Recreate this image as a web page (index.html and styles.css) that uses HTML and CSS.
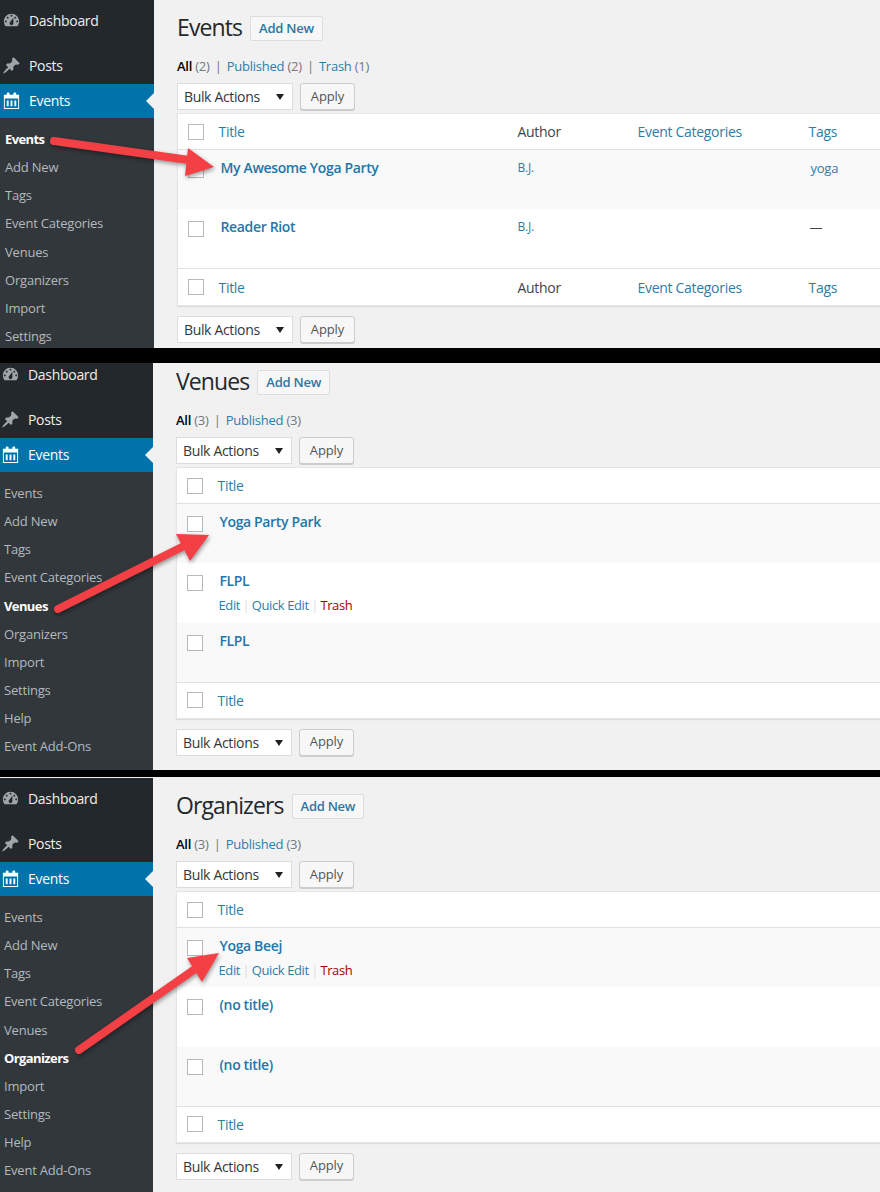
FILE: index.html
```html
<!DOCTYPE html>
<html lang="en">
<head>
    <meta charset="UTF-8">
    <meta name="viewport" content="width=device-width, initial-scale=1.0">
    <title>Events, Venues and Organizers</title>
    <link rel="stylesheet" href="styles.css">
</head>
<body>
    <svg class="icon-defs" aria-hidden="true">
        <symbol id="icon-dashboard" viewBox="0 0 20 20"><path fill-rule="evenodd" d="M3.76 16h12.48c1.1-1.37 1.76-3.11 1.76-5 0-4.42-3.58-8-8-8s-8 3.58-8 8c0 1.89.66 3.63 1.76 5zM10 4c.55 0 1 .45 1 1s-.45 1-1 1-1-.45-1-1 .45-1 1-1zM6 6c.55 0 1 .45 1 1s-.45 1-1 1-1-.45-1-1 .45-1 1-1zm8 0c.55 0 1 .45 1 1s-.45 1-1 1-1-.45-1-1 .45-1 1-1zm-5.37 5.55L12 7v6c0 1.1-.9 2-2 2s-2-.9-2-2c0-.57.24-1.08.63-1.45zM4 10c.55 0 1 .45 1 1s-.45 1-1 1-1-.45-1-1 .45-1 1-1zm12 0c.55 0 1 .45 1 1s-.45 1-1 1-1-.45-1-1 .45-1 1-1z"/></symbol>
        <symbol id="icon-pin" viewBox="0 0 20 20"><path d="M10.44 3.02l1.82-1.82 6.36 6.35-1.83 1.82c-1.05-.68-2.48-.57-3.41.36l-.75.75c-.92.93-1.04 2.35-.35 3.41l-1.83 1.82-2.41-2.41-2.8 2.79c-.42.42-3.38 2.71-3.8 2.29s1.86-3.39 2.28-3.81l2.79-2.79L4.1 9.36l1.83-1.82c1.05.69 2.48.57 3.4-.36l.75-.75c.93-.92 1.05-2.35.36-3.41z"/></symbol>
        <symbol id="icon-calendar" viewBox="0 0 20 20"><path fill-rule="evenodd" d="M15 4h3v15H2V4h3V3c0-.41.15-.76.44-1.06.29-.29.65-.44 1.06-.44s.77.15 1.06.44c.29.3.44.65.44 1.06v1h4V3c0-.41.15-.76.44-1.06.29-.29.65-.44 1.06-.44s.77.15 1.06.44c.29.3.44.65.44 1.06v1zM3 18h14V8H3v10zM5 10h2v6H5v-6zm4 0h2v6H9v-6zm4 0h2v6h-2v-6z"/></symbol>
    </svg>

    <!-- events list -->
    <section class="shot shot-events">
        <nav class="menu">
            <a class="menu-item"><svg class="menu-icon"><use href="#icon-dashboard"/></svg>Dashboard</a>
            <a class="menu-item menu-posts"><svg class="menu-icon"><use href="#icon-pin"/></svg>Posts</a>
            <a class="menu-item menu-active"><svg class="menu-icon"><use href="#icon-calendar"/></svg>Events</a>
            <ul class="submenu">
                <li class="current">Events</li>
                <li>Add New</li>
                <li>Tags</li>
                <li>Event Categories</li>
                <li>Venues</li>
                <li>Organizers</li>
                <li>Import</li>
                <li>Settings</li>
            </ul>
        </nav>
        <main class="content">
            <div class="heading"><h1>Events</h1><a class="add-new">Add New</a></div>
            <div class="subsub"><b>All</b> <span class="count">(2)</span> <span class="sep">|</span> <a>Published</a> <span class="count">(2)</span> <span class="sep">|</span> <a>Trash</a> <span class="count">(1)</span></div>
            <div class="actions"><div class="select">Bulk Actions<i class="caret"></i></div><button class="apply">Apply</button></div>
            <table class="list">
                <colgroup><col class="col-check"><col class="col-title"><col class="col-author"><col class="col-cats"><col></colgroup>
                <thead><tr><td><span class="check"></span></td><th class="head-title">Title</th><th class="plain">Author</th><th>Event Categories</th><th>Tags</th></tr></thead>
                <tbody>
                    <tr class="alt"><td><span class="check"></span></td><td><a class="row-title">My Awesome Yoga Party</a></td><td><a class="small">B.J.</a></td><td></td><td><a class="tag">yoga</a></td></tr>
                    <tr><td><span class="check"></span></td><td><a class="row-title">Reader Riot</a></td><td><a class="small">B.J.</a></td><td></td><td class="dash">—</td></tr>
                </tbody>
                <tfoot><tr><td><span class="check"></span></td><th class="head-title">Title</th><th class="plain">Author</th><th>Event Categories</th><th>Tags</th></tr></tfoot>
            </table>
            <div class="actions actions-bottom"><div class="select">Bulk Actions<i class="caret"></i></div><button class="apply">Apply</button></div>
        </main>
        <svg class="arrow" width="880" height="348">
            <path class="arrow-line" d="M54 141L196 161"/>
            <path class="arrow-head" d="M188 148L214 167L185 176Z"/>
        </svg>
    </section>

    <!-- venues list -->
    <section class="shot shot-venues">
        <nav class="menu">
            <a class="menu-item"><svg class="menu-icon"><use href="#icon-dashboard"/></svg>Dashboard</a>
            <a class="menu-item menu-posts"><svg class="menu-icon"><use href="#icon-pin"/></svg>Posts</a>
            <a class="menu-item menu-active"><svg class="menu-icon"><use href="#icon-calendar"/></svg>Events</a>
            <ul class="submenu">
                <li>Events</li>
                <li>Add New</li>
                <li>Tags</li>
                <li>Event Categories</li>
                <li class="current">Venues</li>
                <li>Organizers</li>
                <li>Import</li>
                <li>Settings</li>
                <li>Help</li>
                <li>Event Add-Ons</li>
            </ul>
        </nav>
        <main class="content">
            <div class="heading"><h1>Venues</h1><a class="add-new">Add New</a></div>
            <div class="subsub"><b>All</b> <span class="count">(3)</span> <span class="sep">|</span> <a>Published</a> <span class="count">(3)</span></div>
            <div class="actions"><div class="select">Bulk Actions<i class="caret"></i></div><button class="apply">Apply</button></div>
            <table class="list">
                <thead><tr><td class="col-check"><span class="check"></span></td><th class="head-title">Title</th></tr></thead>
                <tbody>
                    <tr class="alt"><td><span class="check"></span></td><td><a class="row-title">Yoga Party Park</a></td></tr>
                    <tr><td><span class="check"></span></td><td><a class="row-title">FLPL</a><div class="row-actions"><a>Edit</a><span class="bar">|</span><a>Quick Edit</a><span class="bar">|</span><a class="trash">Trash</a></div></td></tr>
                    <tr class="alt"><td><span class="check"></span></td><td><a class="row-title">FLPL</a></td></tr>
                </tbody>
                <tfoot><tr><td><span class="check"></span></td><th class="head-title">Title</th></tr></tfoot>
            </table>
            <div class="actions actions-bottom"><div class="select">Bulk Actions<i class="caret"></i></div><button class="apply">Apply</button></div>
        </main>
        <svg class="arrow" width="880" height="407">
            <path class="arrow-line" d="M58 246L186 182"/>
            <path class="arrow-head" d="M176 171L209 172L190 198Z"/>
        </svg>
    </section>

    <!-- organizers list -->
    <section class="shot shot-organizers">
        <nav class="menu">
            <a class="menu-item"><svg class="menu-icon"><use href="#icon-dashboard"/></svg>Dashboard</a>
            <a class="menu-item menu-posts"><svg class="menu-icon"><use href="#icon-pin"/></svg>Posts</a>
            <a class="menu-item menu-active"><svg class="menu-icon"><use href="#icon-calendar"/></svg>Events</a>
            <ul class="submenu">
                <li>Events</li>
                <li>Add New</li>
                <li>Tags</li>
                <li>Event Categories</li>
                <li>Venues</li>
                <li class="current">Organizers</li>
                <li>Import</li>
                <li>Settings</li>
                <li>Help</li>
                <li>Event Add-Ons</li>
            </ul>
        </nav>
        <main class="content">
            <div class="heading"><h1>Organizers</h1><a class="add-new">Add New</a></div>
            <div class="subsub"><b>All</b> <span class="count">(3)</span> <span class="sep">|</span> <a>Published</a> <span class="count">(3)</span></div>
            <div class="actions"><div class="select">Bulk Actions<i class="caret"></i></div><button class="apply">Apply</button></div>
            <table class="list">
                <thead><tr><td class="col-check"><span class="check"></span></td><th class="head-title">Title</th></tr></thead>
                <tbody>
                    <tr class="alt"><td><span class="check"></span></td><td><a class="row-title">Yoga Beej</a><div class="row-actions"><a>Edit</a><span class="bar">|</span><a>Quick Edit</a><span class="bar">|</span><a class="trash">Trash</a></div></td></tr>
                    <tr><td><span class="check"></span></td><td><a class="row-title">(no title)</a></td></tr>
                    <tr class="alt"><td><span class="check"></span></td><td><a class="row-title">(no title)</a></td></tr>
                </tbody>
                <tfoot><tr><td><span class="check"></span></td><th class="head-title">Title</th></tr></tfoot>
            </table>
            <div class="actions actions-bottom"><div class="select">Bulk Actions<i class="caret"></i></div><button class="apply">Apply</button></div>
        </main>
        <svg class="arrow" width="880" height="415">
            <path class="arrow-line" d="M79 273L195 192"/>
            <path class="arrow-head" d="M187 181L219 176L202 205Z"/>
        </svg>
    </section>
</body>
</html>
```

FILE: styles.css
```css
* {
    box-sizing: border-box;
}
body {
    margin: 0;
    background-color: #000;
    font-family: "Open Sans", Arial, sans-serif;
    font-size: 13px;
    letter-spacing: -0.25px;
    color: #444;
}
a {
    color: #2e7da6;
}
.icon-defs {
    position: absolute;
    width: 0;
    height: 0;
}

.shot {
    position: relative;
    display: flex;
    overflow: hidden;
    background-color: #f1f1f1;
}
.shot-events {
    height: 348px;
    --menu-width: 154px;
    --shift: 0px;
}
.shot-venues {
    height: 407px;
    margin-top: 15px;
    --menu-width: 153px;
    --shift: -9px;
}
.shot-organizers {
    height: 415px;
    margin-top: 7px;
    --menu-width: 153px;
    --shift: 1px;
}

/* sidebar */
.menu {
    flex: 0 0 var(--menu-width);
    margin-top: var(--shift);
    background-color: #23282d;
    color: #eee;
}
.shot-venues .menu,
.shot-organizers .menu {
    padding-bottom: 40px;
}
.menu-item {
    display: flex;
    align-items: center;
    gap: 8px;
    height: 34px;
    padding-left: 2px;
    padding-bottom: 1px;
    margin-top: 4px;
    font-size: 14px;
    letter-spacing: -0.3px;
    color: #eee;
}
.shot-venues .menu-item,
.shot-organizers .menu-item {
    padding-left: 1px;
}
.menu-posts {
    margin-top: 11px;
}
.menu-icon {
    flex: 0 0 19px;
    width: 19px;
    height: 19px;
    fill: #a0a5aa;
}
.menu-active {
    position: relative;
    margin-top: 1px;
    padding-bottom: 2px;
    background-color: #0073aa;
    color: #fff;
}
.menu-active .menu-icon {
    fill: #fff;
}
.menu-active::after {
    content: "";
    position: absolute;
    right: 0;
    top: 9px;
    border: 8px solid transparent;
    border-left-width: 0;
    border-right-color: #f1f1f1;
}
.submenu {
    list-style: none;
    margin: 0;
    padding: 7px 0 60px;
    background-color: #32373c;
    color: #b4b9be;
    letter-spacing: -0.2px;
}
.submenu li {
    height: 28.14px;
    line-height: 28px;
    padding-left: 5px;
    white-space: nowrap;
}
.shot-venues .submenu li,
.shot-organizers .submenu li {
    padding-left: 4px;
}
.submenu .current {
    color: #fff;
    font-weight: 700;
    letter-spacing: -0.6px;
}

/* list page */
.content {
    flex: 1;
    min-width: 0;
    margin-top: var(--shift);
    padding: 0 0 0 23px;
}
.heading {
    display: flex;
    align-items: center;
    gap: 8px;
    height: 56px;
}
h1 {
    margin: 0;
    padding-bottom: 2px;
    font-size: 23px;
    font-weight: 400;
    letter-spacing: -0.9px;
    color: #23282d;
}
.add-new {
    height: 25px;
    line-height: 23px;
    padding: 0 8px;
    border: 1px solid #ddd;
    background-color: #f7f7f7;
    border-radius: 2px;
    font-weight: 600;
    color: #2a77a3;
}
.subsub {
    height: 27px;
    line-height: 20px;
    white-space: nowrap;
}
.subsub b {
    font-weight: 600;
    color: #000;
}
.count {
    color: #72777c;
}
.sep {
    margin: 0 2px;
    color: #72777c;
}
.actions {
    display: flex;
    gap: 7px;
    height: 30px;
}
.actions-bottom {
    margin-top: 10px;
}
.select {
    position: relative;
    width: 116px;
    height: 27px;
    line-height: 25px;
    padding-left: 6px;
    border: 1px solid #ddd;
    background-color: #fff;
    font-size: 14px;
    letter-spacing: -0.35px;
    color: #32373c;
}
.caret {
    position: absolute;
    right: 8px;
    top: 10px;
    border: 4px solid transparent;
    border-top: 6px solid #222;
    border-bottom-width: 0;
}
.apply {
    width: 55px;
    height: 27px;
    padding: 0 0 2px;
    border: 1px solid #ccc;
    border-radius: 3px;
    background-color: #f7f7f7;
    box-shadow: 0 1px 0 #ccc;
    font-family: inherit;
    font-size: 13px;
    letter-spacing: -0.1px;
    color: #555;
}

/* tables */
.list {
    width: 100%;
    table-layout: fixed;
    border-collapse: collapse;
    background-color: #fff;
    box-shadow: 0 1px 1px rgba(0, 0, 0, 0.08);
    border: 1px solid #e5e5e5;
    border-right: 0;
}
.col-check {
    width: 41px;
}
.col-title {
    width: 299px;
}
.col-author {
    width: 120px;
}
.col-cats {
    width: 171px;
}
.list th {
    height: 36px;
    padding: 0;
    font-weight: 400;
    text-align: left;
    color: #2e7da6;
    font-size: 14px;
    letter-spacing: -0.3px;
}
.shot-events tfoot th {
    height: 37px;
}
.list td {
    padding: 0;
    vertical-align: top;
}
.list th.plain {
    color: #444;
}
thead td,
tfoot td {
    vertical-align: middle !important;
}
thead tr {
    border-bottom: 1px solid #e1e1e1;
}
tfoot tr {
    border-top: 1px solid #e1e1e1;
}
tbody tr {
    height: 59.5px;
}
.alt {
    background-color: #f9f9f9;
}
.check {
    display: block;
    width: 16px;
    height: 16px;
    margin-left: 10px;
    border: 1px solid #b4b9be;
    background-color: #fff;
}
tbody .check {
    margin-top: 12px;
}
.row-title {
    display: block;
    padding: 8px 0 0 2px;
    font-size: 14px;
    line-height: 20px;
    font-weight: 600;
    letter-spacing: -0.35px;
    color: #1f76a8;
}
.small {
    display: block;
    padding-top: 9px;
    font-size: 12px;
}
.tag {
    display: block;
    padding: 9px 0 0 2px;
}
.list .dash {
    padding: 9px 0 0 1px;
    line-height: 18px;
}
.row-actions {
    padding: 4px 0 0 1px;
    line-height: 20px;
    letter-spacing: -0.4px;
}
.bar {
    margin: 0 2.5px;
    color: #ddd;
}
.trash {
    color: #a00;
}

/* arrows drawn over the screenshot */
.arrow {
    position: absolute;
    left: 0;
    top: 0;
    pointer-events: none;
    filter: drop-shadow(1px 2px 2px rgba(0, 0, 0, 0.4));
}
.arrow-line {
    fill: none;
    stroke: #f44044;
    stroke-width: 8;
    stroke-linecap: round;
}
.arrow-head {
    fill: #f44044;
}
```
